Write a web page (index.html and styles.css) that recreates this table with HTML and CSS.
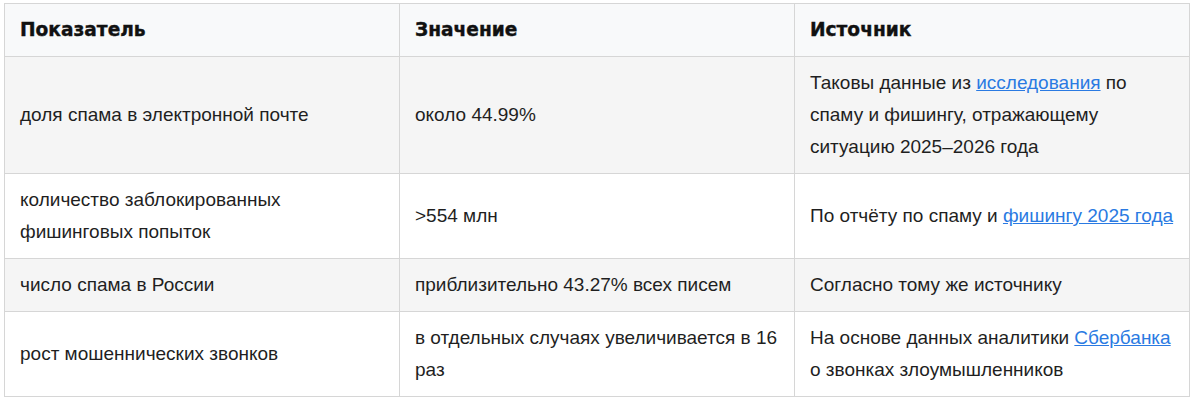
FILE: index.html
```html
<!DOCTYPE html>
<html lang="ru">
<head>
<meta charset="utf-8">
<title>Таблица</title>
<link rel="stylesheet" href="styles.css">
</head>
<body>
<div class="wrap">
<table class="data">
  <thead>
    <tr>
      <th>Показатель</th>
      <th>Значение</th>
      <th>Источник</th>
    </tr>
  </thead>
  <tbody>
    <tr>
      <td>доля спама в электронной почте</td>
      <td>около 44.99%</td>
      <td>Таковы данные из <a href="#">исследования</a> по спаму и фишингу, отражающему ситуацию 2025–2026 года</td>
    </tr>
    <tr>
      <td>количество заблокированных фишинговых попыток</td>
      <td>&gt;554 млн</td>
      <td>По отчёту по спаму и <a href="#">фишингу 2025 года</a></td>
    </tr>
    <tr>
      <td>число спама в России</td>
      <td>приблизительно 43.27% всех писем</td>
      <td>Согласно тому же источнику</td>
    </tr>
    <tr>
      <td>рост мошеннических звонков</td>
      <td>в отдельных случаях увеличивается в 16 раз</td>
      <td>На основе данных аналитики <a href="#">Сбербанка</a> о звонках злоумышленников</td>
    </tr>
  </tbody>
</table>
</div>
</body>
</html>
```

FILE: styles.css
```css
html, body {
  margin: 0;
  padding: 0;
  background: #ffffff;
}
.wrap {
  padding: 3px 3px 0 4px;
}
.data {
  width: 100%;
  border-collapse: collapse;
  table-layout: fixed;
  font-family: "Liberation Sans", Arial, sans-serif;
  font-size: 19px;
  line-height: 32px;
  color: #1f1f1f;
  border: 1px solid #d6d6d6;
}
.data th, .data td {
  border: 1px solid #d6d6d6;
  padding: 10px 15px;
  text-align: left;
  vertical-align: middle;
}
.data th {
  background: #f8f9fa;
  font-family: "DejaVu Sans", "Liberation Sans", sans-serif;
  font-weight: 700;
  font-size: 18.6px;
  -webkit-text-stroke: 0.4px #111111;
  padding: 10px 15px;
  color: #111111;
}
.data tbody tr:nth-child(odd) td {
  background: #f5f5f5;
}
.data a {
  color: #2a7ae2;
  text-decoration: underline;
}
```
